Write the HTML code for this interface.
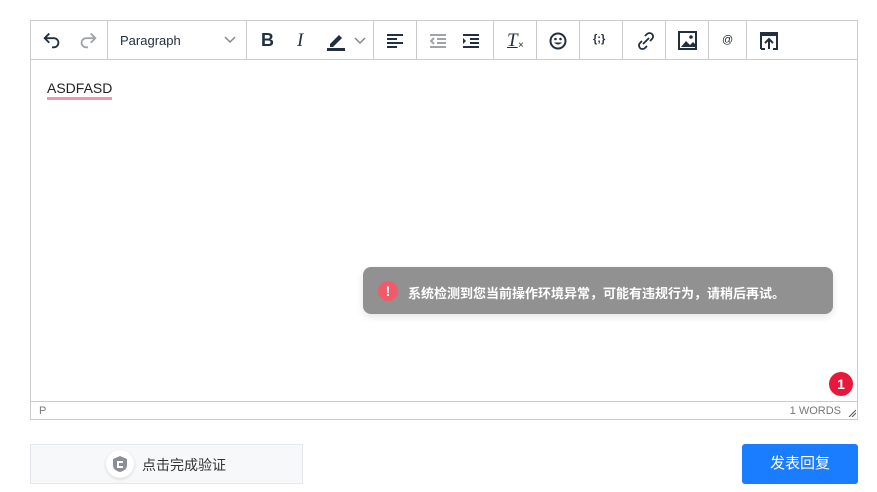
<!DOCTYPE html><html><head><style>
body{margin:0;width:877px;height:492px;background:#fff;font-family:"Liberation Sans","Noto Sans CJK SC",sans-serif;position:relative;overflow:hidden}
.ed{position:absolute;left:30px;top:20px;width:826px;height:398px;border:1px solid #ccc}
.tb{position:absolute;left:0;top:0;width:826px;height:38px;border-bottom:1px solid #ccc}
.sep{position:absolute;top:0;width:1px;height:38px;background:#ccc}
.ic{position:absolute;top:8px}
.a{position:absolute}
</style></head><body>
<div class="ed">
<div class="tb">
<svg class="ic" style="left:10px" width="22" height="22" viewBox="0 0 24 24"><path d="M9 5L4 10l5 5M4 10h10a5 5 0 0 1 0 10h-2" fill="none" stroke="#222f3e" stroke-width="2"/></svg>
<svg class="ic" style="left:46px" width="22" height="22" viewBox="0 0 24 24"><path d="M15 5l5 5-5 5M20 10H10a5 5 0 0 0 0 10h2" fill="none" stroke="#a0a4a8" stroke-width="2"/></svg>
<div class="sep" style="left:76px"></div>
<div class="a" style="left:89px;top:12px;font-size:13px;color:#222f3e">Paragraph</div>
<svg class="a" style="left:193px;top:15px" width="12" height="8"><path d="M1 1l5 5 5-5" fill="none" stroke="#888" stroke-width="1.5"/></svg>
<div class="sep" style="left:215px"></div>
<div class="a" style="left:230px;top:9px;font-size:18px;font-weight:bold;color:#222f3e">B</div>
<div class="a" style="left:266px;top:9px;font-size:19px;font-style:italic;font-family:'Liberation Serif',serif;color:#222f3e">I</div>
<svg class="a" style="left:294px;top:9px" width="22" height="22" viewBox="0 0 22 22"><path d="M5 14l3-3 6-6 3 3-6 6-3 3H5z" fill="#222f3e"/><rect x="2" y="18" width="18" height="3" fill="#222f3e"/></svg>
<svg class="a" style="left:323px;top:16px" width="12" height="8"><path d="M1 1l5 5 5-5" fill="none" stroke="#888" stroke-width="1.5"/></svg>
<div class="sep" style="left:342px"></div>
<svg class="a" style="left:356px;top:12px" width="18" height="16"><path d="M0 2h16M0 6h10M0 10h16M0 14h10" stroke="#222f3e" stroke-width="2"/></svg>
<div class="sep" style="left:385px"></div>
<svg class="a" style="left:399px;top:12px" width="18" height="16"><path d="M0 2h16M7 6h9M7 10h9M0 14h16M4 5L1 8l3 3" stroke="#a0a4a8" stroke-width="2" fill="none"/></svg>
<svg class="a" style="left:432px;top:12px" width="18" height="16"><path d="M0 2h16M7 6h9M7 10h9M0 14h16" stroke="#222f3e" stroke-width="2"/><path d="M0 5l3 3-3 3z" fill="#222f3e"/></svg>
<div class="sep" style="left:462px"></div>
<div class="a" style="left:476px;top:9px;font-size:19px;font-style:italic;font-family:'Liberation Serif',serif;color:#222f3e;text-decoration:underline">T</div><div class="a" style="left:487px;top:19px;font-size:10px;color:#222f3e">×</div>
<div class="sep" style="left:505px"></div>
<svg class="a" style="left:518px;top:11px" width="18" height="18"><circle cx="9" cy="9" r="7.5" fill="none" stroke="#222f3e" stroke-width="2"/><circle cx="6.5" cy="7" r="1.3" fill="#222f3e"/><circle cx="11.5" cy="7" r="1.3" fill="#222f3e"/><path d="M5 10.5q4 4 8 0z" fill="#222f3e"/></svg>
<div class="sep" style="left:548px"></div>
<div class="a" style="left:562px;top:12px;font-size:11px;font-weight:bold;color:#222f3e">{;}</div>
<div class="sep" style="left:591px"></div>
<svg class="a" style="left:605px;top:10px" width="20" height="20" viewBox="0 0 20 20"><path d="M9 5l2-2a3 3 0 0 1 5 5l-2 2M11 15l-2 2a3 3 0 0 1-5-5l2-2M7 13l6-6" fill="none" stroke="#222f3e" stroke-width="1.8"/></svg>
<div class="sep" style="left:634px"></div>
<svg class="a" style="left:647px;top:10px" width="20" height="20"><rect x="1" y="1" width="17" height="17" fill="none" stroke="#222f3e" stroke-width="2"/><path d="M3 16l5-6 4 4 3-3 2 2v3z" fill="#222f3e"/><circle cx="13" cy="6" r="1.8" fill="#222f3e"/></svg>
<div class="sep" style="left:677px"></div>
<div class="a" style="left:691px;top:13px;font-size:11px;color:#222f3e">@</div>
<div class="sep" style="left:715px"></div>
<svg class="a" style="left:728px;top:10px" width="20" height="20"><path d="M2 18V2h16v16h-4M6 18H2" fill="none" stroke="#222f3e" stroke-width="2"/><rect x="2" y="2" width="16" height="3" fill="#222f3e"/><path d="M10 18v-9M6 12l4-4 4 4" fill="none" stroke="#222f3e" stroke-width="2"/></svg>
</div>
<div class="a" style="left:16px;top:59px;font-size:14px;color:#222;border-bottom:3px solid #f993a8;line-height:17px">ASDFASD</div>
<div class="a" style="left:0;top:380px;width:826px;height:1px;background:#ccc"></div>
<div class="a" style="left:8px;top:384px;font-size:11px;color:#777">P</div>
<div class="a" style="right:16px;top:384px;font-size:11px;color:#777">1 WORDS</div>
<svg class="a" style="right:1px;top:388px" width="8" height="8"><path d="M1 8L8 1M4 8l4-4" stroke="#555"/></svg>
</div>
<div class="a" style="left:363px;top:267px;width:470px;height:47px;background:#919191;border-radius:8px;box-shadow:0 3px 8px rgba(0,0,0,.1)"></div>
<div class="a" style="left:378px;top:281px;width:20px;height:20px;border-radius:50%;background:#f15a6b;color:#fff;font-size:14px;font-weight:bold;text-align:center;line-height:20px">!</div>
<div class="a" style="left:408px;top:283px;font-size:13px;font-weight:bold;color:#fff">系统检测到您当前操作环境异常，可能有违规行为，请稍后再试。</div>
<div class="a" style="left:829px;top:372px;width:24px;height:24px;border-radius:50%;background:#e8173c;color:#fff;font-size:14px;font-weight:bold;text-align:center;line-height:24px">1</div>
<div class="a" style="left:30px;top:444px;width:271px;height:38px;border:1px solid #e4e7eb;background:#f7f8fa"></div>
<div class="a" style="left:106px;top:450px;width:28px;height:28px;border-radius:50%;background:#fff;box-shadow:0 1px 3px rgba(0,0,0,.15)"></div>
<svg class="a" style="left:112px;top:455px" width="16" height="18"><path d="M8 1l7 3v6c0 4-3 6-7 7-4-1-7-3-7-7V4z" fill="#8a8f96"/><path d="M11 7H6v5h5" fill="none" stroke="#fff" stroke-width="2"/></svg>
<div class="a" style="left:142px;top:455px;font-size:14px;color:#333">点击完成验证</div>
<div class="a" style="left:742px;top:444px;width:116px;height:40px;border-radius:3px;background:#1a7cff;color:#fff;font-size:15px;text-align:center;line-height:40px">发表回复</div>
</body></html>
